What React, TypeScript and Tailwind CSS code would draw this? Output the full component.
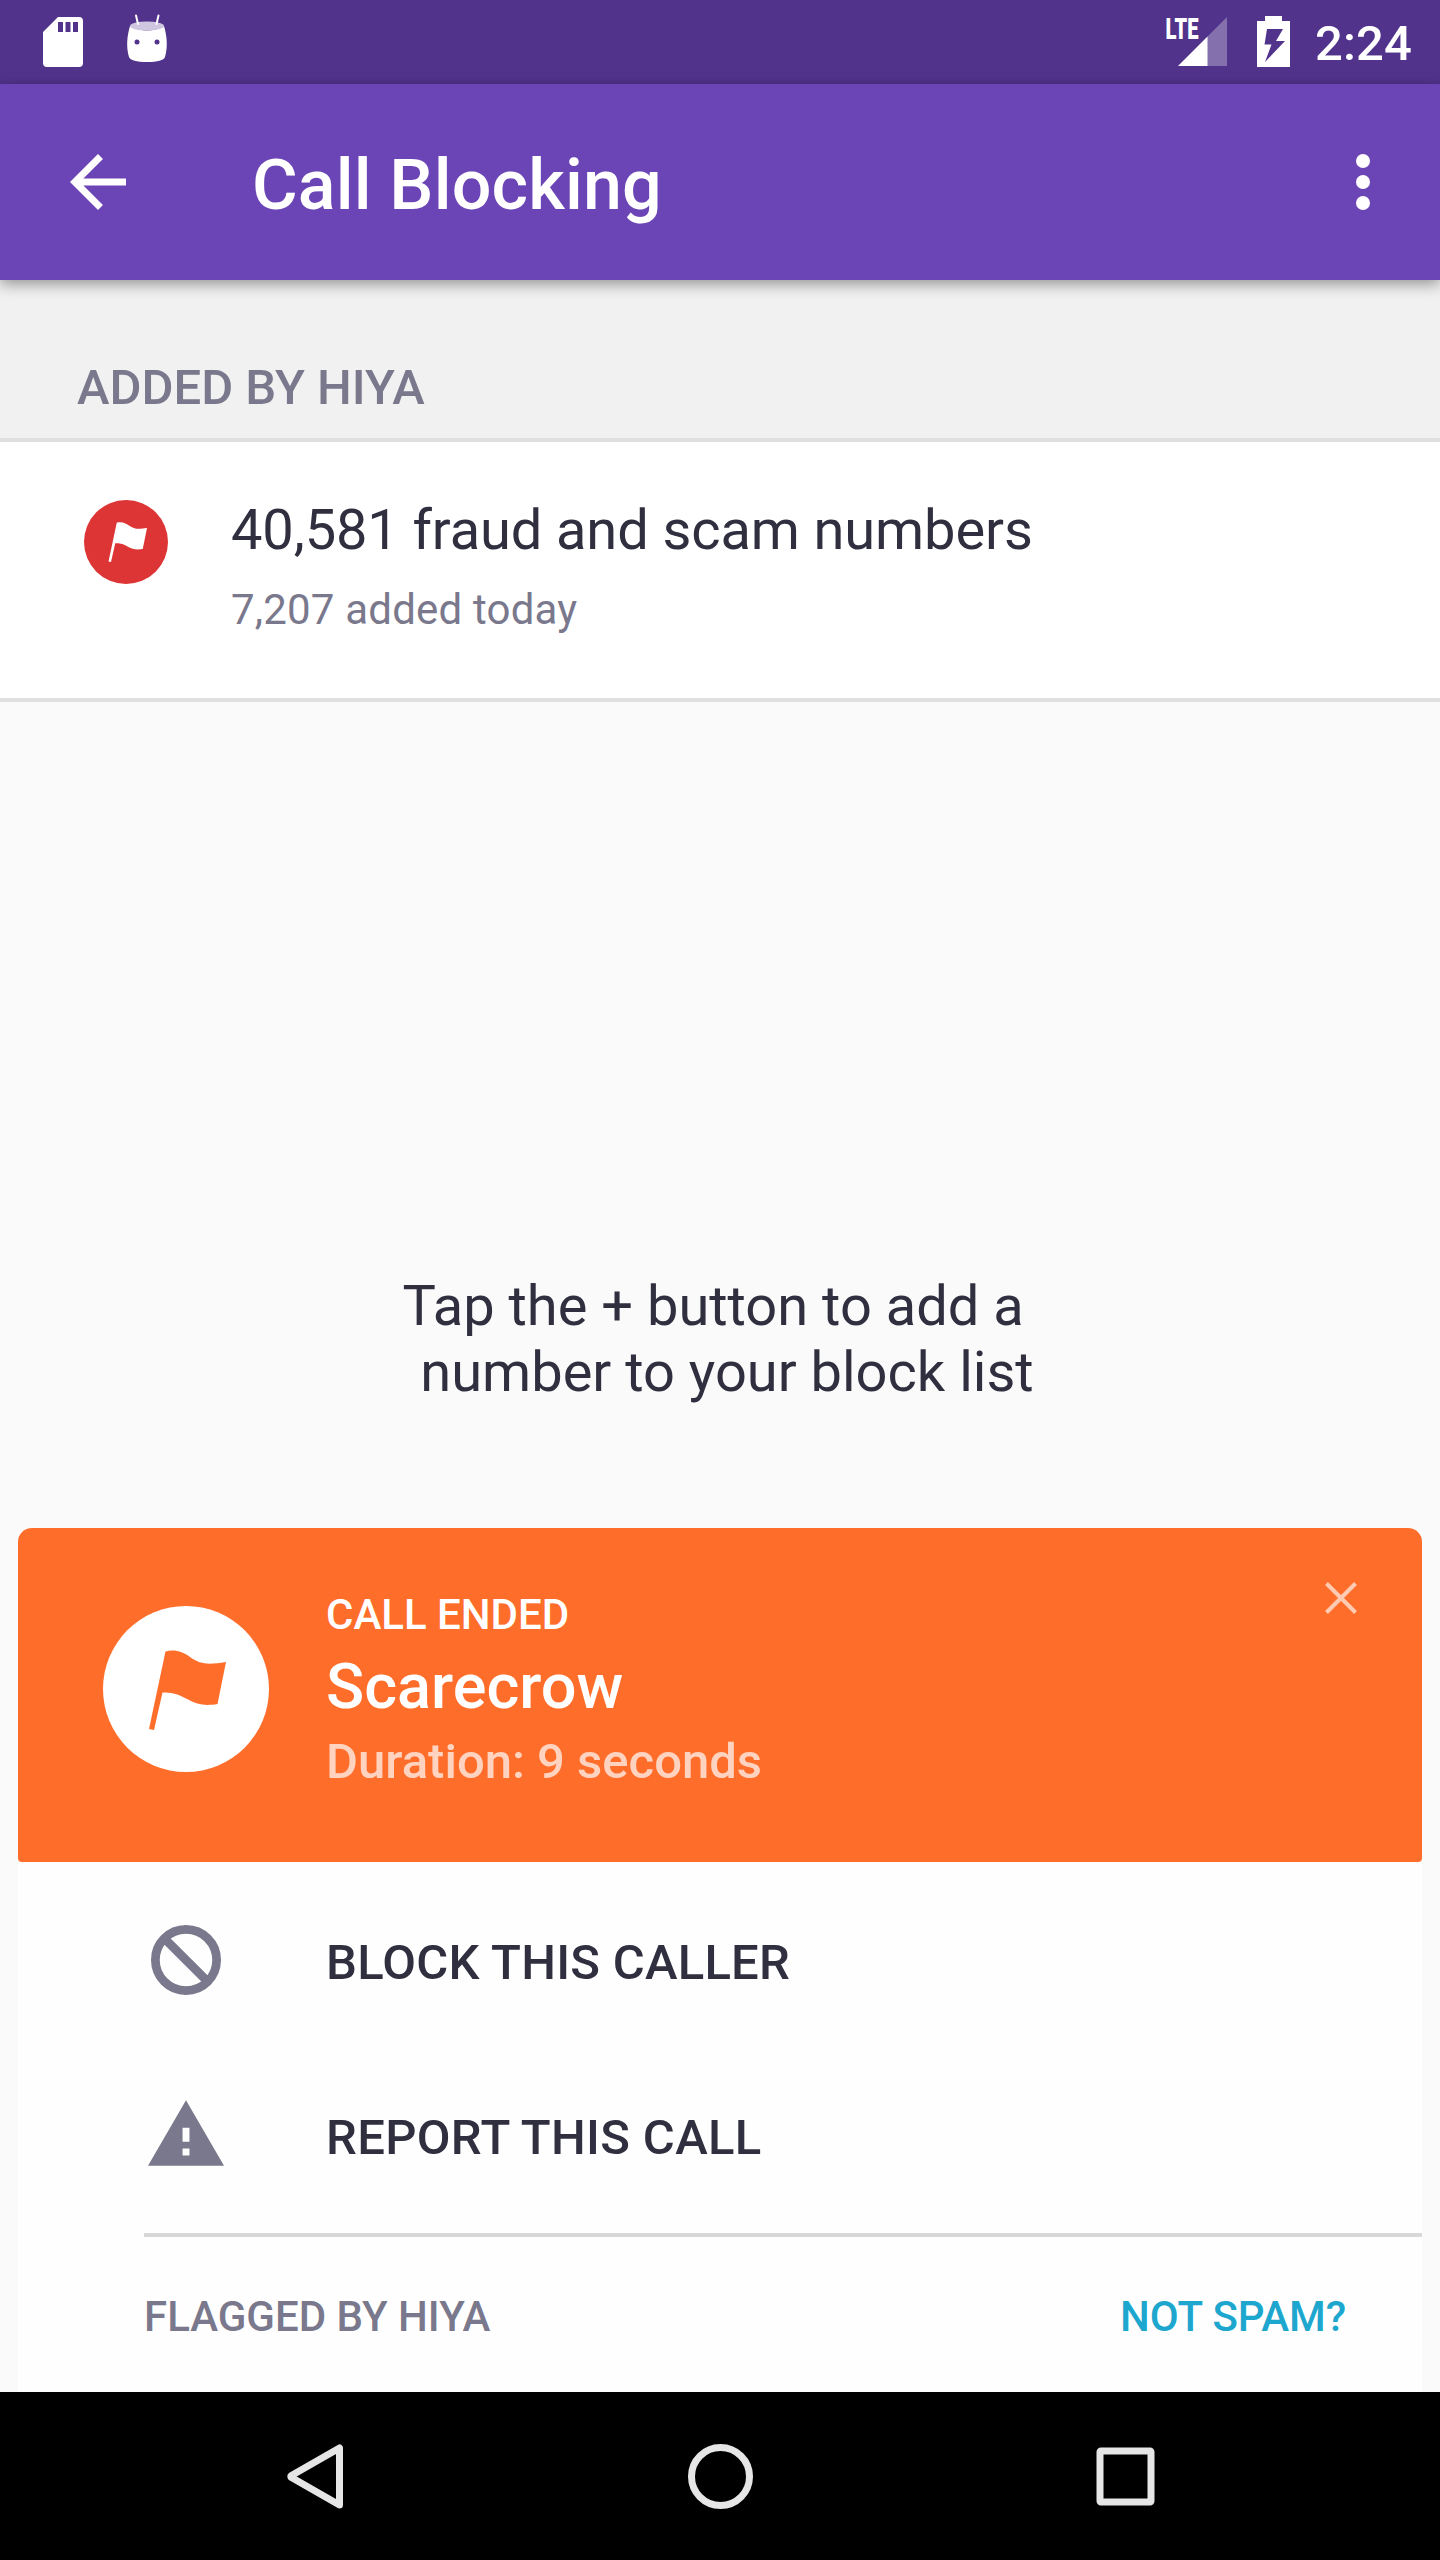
import React from "react";

const Flag = ({ className }: { className: string }) => (
  <svg viewBox="0 0 78 80" className={className} fill="currentColor">
    <path d="M16.500 1.500 C26 -1 34 2 41 7 C52 15 60 14.500 77 12 L68.500 54 C56 56 49 55 37 48.500 C27 43 22 42.500 13.500 42.500 L5 80 L0 79 Z" />
  </svg>
);

function StatusBar() {
  return (
    <div className="flex h-[84px] items-center bg-[#51338c] text-white">
      <svg viewBox="0 0 180 84" className="h-[84px] w-[180px]" fill="#fff">
        <path
          fillRule="evenodd"
          d="M58 17H79Q83 17 83 21V63Q83 67 79 67H47Q43 67 43 63V32ZM58 22V32H63V22ZM65.500 22V32H70.500V22ZM73 22V32H78V22Z"
        />
        <path d="M130 26Q147 35 164 26C167 36 168 47 165 57Q163 62 147 62Q131 62 129 57C126 47 127 36 130 26Z" />
        <ellipse cx="147" cy="26" rx="17" ry="4.500" fill="#cfc6e0" />
        <path d="M136 15.500L138 24M158.500 15.500L156.500 24" stroke="#fff" strokeWidth="2" strokeLinecap="round" />
        <circle cx="137" cy="42" r="2.500" fill="#51338c" />
        <circle cx="157" cy="42" r="2.500" fill="#51338c" />
      </svg>
      <div className="grow" />
      <svg viewBox="1160 0 140 84" className="h-[84px] w-[140px]" fill="#fff">
        <text x="1165.500" y="39" fontSize="29.500" fontWeight="900" fontFamily="Roboto, sans-serif" textLength="33" lengthAdjust="spacingAndGlyphs">
          LTE
        </text>
        <path d="M1227 17V66H1207V37Z" fillOpacity=".3" />
        <path d="M1207.500 36.500V66H1178Z" />
        <path fillRule="evenodd" d="M1265 16H1282V21H1290V67H1257V21H1265ZM1267 29L1264.500 44.500H1271.500L1265 62L1285 41H1276L1283 29Z" />
      </svg>
      <span className="ml-[15px] w-[125px] pt-[4px] text-[49px] leading-[88px] font-medium tracking-[0.15px]">2:24</span>
    </div>
  );
}

function AppBar() {
  return (
    <header className="relative flex h-[196px] items-center bg-[#6b45b6] text-white shadow-[0_4px_14px_rgba(0,0,0,0.4)]">
      <svg viewBox="4 4 16 16" className="ml-[70px] h-[56px] w-[56px]" fill="currentColor">
        <path d="M20 11H7.830l5.590-5.590L12 4l-8 8 8 8 1.410-1.410L7.830 13H20v-2z" />
      </svg>
      <h1 className="ml-[126px] grow pt-[6px] text-[70px] leading-[82px] font-medium tracking-[0.16px]">Call Blocking</h1>
      <svg viewBox="0 0 14 56" className="mr-[70px] h-[56px] w-[14px]" fill="currentColor">
        <circle cx="7" cy="7" r="7" />
        <circle cx="7" cy="28" r="7" />
        <circle cx="7" cy="49" r="7" />
      </svg>
    </header>
  );
}

function CallCard() {
  return (
    <section className="mx-[18px] flex h-[864px] flex-col rounded-t-[14px] bg-[#fefefe]">
      <div className="flex h-[334px] rounded-t-[14px] rounded-b-[4px] bg-[#ff6d2a] text-white">
        <div className="mt-[78px] ml-[85px] h-[166px] w-[166px] rounded-full bg-white pt-[44px] pl-[46px] text-[#ff6d2a]">
          <Flag className="h-[80px] w-[78px]" />
        </div>
        <div className="ml-[57px] grow pt-[62px]">
          <div className="text-[42px] leading-[50px] font-medium">CALL ENDED</div>
          <div className="mt-[9px] text-[63px] leading-[76px] font-medium">Scarecrow</div>
          <div className="mt-[8px] text-[49px] leading-[58px] font-medium text-white/70">Duration: 9 seconds</div>
        </div>
        <svg viewBox="0 0 32 32" className="mt-[54px] mr-[65px] h-[32px] w-[32px]" fill="none" stroke="#ffccb3" strokeWidth="4">
          <path d="M1.500 1.500L30.500 30.500M30.500 1.500L1.500 30.500" />
        </svg>
      </div>
      <div className="flex h-[198px] text-[#302f40]">
        <svg viewBox="2 2 20 20" className="mt-[63px] ml-[133px] h-[70px] w-[70px]" fill="none" stroke="#79788c">
          <circle cx="12" cy="12" r="8.750" strokeWidth="2.500" />
          <path d="M5.800 5.800L18.200 18.200" strokeWidth="2.500" />
        </svg>
        <span className="mt-[72px] ml-[105px] text-[49px] leading-[58px] font-medium tracking-[0.25px]">BLOCK THIS CALLER</span>
      </div>
      <div className="flex h-[173px] text-[#302f40]">
        <svg viewBox="1 2 22 19" className="mt-[40px] ml-[130px] h-[66px] w-[76px]" fill="#79788c">
          <path d="M1 21h22L12 2 1 21zm12-3h-2v-2h2v2zm0-4h-2v-4h2v4z" />
        </svg>
        <span className="mt-[49px] ml-[102px] text-[49px] leading-[58px] font-medium tracking-[0.33px]">REPORT THIS CALL</span>
      </div>
      <div className="ml-[126px] flex grow items-center justify-between border-t-4 border-[#d8d8d8] pt-[5px] pr-[76px] text-[42px] leading-[50px] font-medium">
        <span className="text-[#79788c]">FLAGGED BY HIYA</span>
        <span className="tracking-[-0.1px] text-[#1ea7ce]">NOT SPAM?</span>
      </div>
    </section>
  );
}

export default function App() {
  return (
    <div className="flex h-[2560px] w-[1440px] flex-col overflow-hidden bg-[#fafafa] font-[Roboto,sans-serif]">
      <StatusBar />
      <AppBar />
      <div className="h-[162px] border-b-4 border-[#e0e0e0] bg-[#f1f1f1] pt-[79px] pl-[77px] text-[49px] leading-[58px] font-medium text-[#79788c]">
        ADDED BY HIYA
      </div>
      <div className="flex h-[260px] border-b-4 border-[#e0e0e0] bg-white">
        <div className="mt-[58px] ml-[84px] h-[84px] w-[84px] rounded-full bg-[#dd3535] pt-[22px] pl-[24px] text-white">
          <Flag className="h-[40px] w-[40px]" />
        </div>
        <div className="ml-[63px]">
          <div className="mt-[55px] text-[56px] leading-[66px] tracking-[-0.11px] text-[#302f40]">40,581 fraud and scam numbers</div>
          <div className="mt-[22px] text-[42px] leading-[50px] tracking-[0.19px] text-[#79788c]">7,207 added today</div>
        </div>
      </div>
      <div className="grow pt-[571px] text-center text-[56px] leading-[66px] whitespace-pre text-[#302f40]">
        {"Tap the + button to add a \n number to your block list"}
      </div>
      <CallCard />
      <nav className="flex h-[168px] shrink-0 bg-black">
        <svg viewBox="0 0 1440 168" className="h-[168px] w-[1440px]" fill="none" stroke="#e6e6e6" strokeWidth="7" strokeLinejoin="round">
          <path d="M339.500 56V113L291.500 85.500Q290 84.500 291.500 83.500Z" />
          <circle cx="720.500" cy="84.500" r="29" />
          <rect x="1100" y="59" width="51" height="51" rx="1" />
        </svg>
      </nav>
    </div>
  );
}
